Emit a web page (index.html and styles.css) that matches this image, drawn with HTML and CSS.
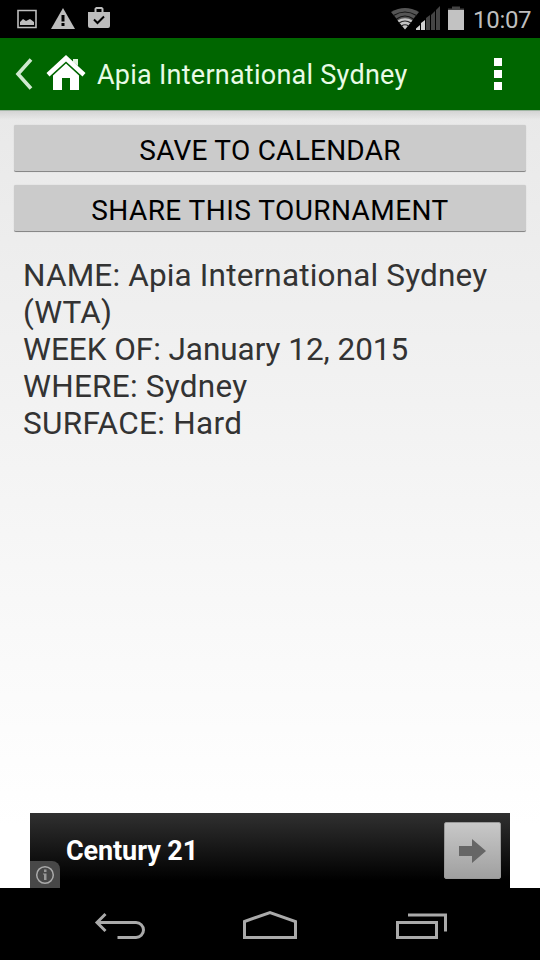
FILE: index.html
```html
<!DOCTYPE html>
<html lang="en">
<head>
    <meta charset="UTF-8">
    <title>Apia International Sydney</title>
    <link rel="stylesheet" href="styles.css">
</head>
<body>
<div class="screen">
    <div class="status">
        <svg class="notify" width="96" height="38" viewBox="0 0 96 38">
            <path d="M1 10.5h18v17H1z" fill="none" stroke="#bdbdbd" stroke-width="1.6"/>
            <path d="M3 25v-3l3-3 3 2 4-2 4 3v3z" fill="#bdbdbd"/>
            <path d="M46 8L58 29H34z" fill="#bdbdbd"/>
            <path d="M44.500 15h3v6.500h-3zM44.500 23h3v3h-3z" fill="#000"/>
            <path d="M71 12h6.500V8.500L79 7h6l1.500 1.500V12H93v14q0 2-2 2H73q-2 0-2-2zM79.500 12h5V9h-5z" fill="#bdbdbd" fill-rule="evenodd"/>
            <path d="M77 19.500l3.500 3.500 6.500-6.500" fill="none" stroke="#000" stroke-width="2"/>
        </svg>
        <svg class="signal" width="76" height="38" viewBox="0 0 76 38">
            <path d="M1 12Q15 4 29 12L15 29z" fill="#555"/>
            <path d="M3.500 15.500Q15 8.500 26.500 15.500M6.500 19Q15 13 23.500 19" fill="none" stroke="#151515" stroke-width="1.200"/>
            <path d="M7.500 20.500Q15 16 22.500 20.500L15 29.500z" fill="#c4c4c4"/>
            <path d="M9 23q6-4 12 0M11.500 26q3.500-2.500 7 0" fill="none" stroke="#222" stroke-width="1.200"/>
            <path d="M26 30v-1.500l4-3.500v5zM31 30v-7l4-3v10z" fill="#d0d0d0"/>
            <path d="M36 30V18l4-3v15zM41 30V15l4-4v19zM46 30V10l4-4v24z" fill="#444"/>
            <path d="M58 8.500h4V6.500h8v2h4V30H58z" fill="#444"/>
            <path d="M58 10h16v20H58z" fill="#c2c2c2"/>
        </svg>
        <span class="clock">10:07</span>
    </div>
    <div class="bar">
        <svg class="up" width="90" height="72" viewBox="0 0 90 72">
            <path d="M31 21.500L18 36l13 14.500" fill="none" stroke="#cfe8cf" stroke-width="3.600"/>
            <path d="M73 21h5v7l-5-4z" fill="#e0f4de"/>
            <path d="M66 17l19.500 18-3 3.500L66 23.500 49.500 38.500l-3-3.500z" fill="#fff"/>
            <path d="M66 25.500l13 12V52h-9V40h-8v12h-9V37.500z" fill="#fff"/>
        </svg>
        <span class="title">Apia International Sydney</span>
        <div class="more"><i></i><i></i><i></i></div>
    </div>
    <div class="content">
        <button class="save">SAVE TO CALENDAR</button>
        <button class="share">SHARE THIS TOURNAMENT</button>
        <div class="info">
            <p>NAME: Apia International Sydney (WTA)</p>
            <p class="week">WEEK OF: January 12, 2015</p>
            <p class="where">WHERE: Sydney</p>
            <p class="surface">SURFACE: Hard</p>
        </div>
        <div class="ad">
            <span class="ad-name">Century 21</span>
            <div class="ad-go">
                <svg width="27" height="24" viewBox="0 0 27 24"><path d="M0 7h13V0l14 12-14 12v-7H0z" fill="#666"/></svg>
            </div>
            <div class="ad-info">
                <svg width="20" height="20" viewBox="0 0 20 20">
                    <circle cx="10" cy="10" r="8.300" fill="none" stroke="#aaa" stroke-width="1.500"/>
                    <path d="M9 4.500h2.500V7H9zM8 8.500h3.500V15H9V9.500H8z" fill="#999"/>
                </svg>
            </div>
        </div>
    </div>
    <div class="nav">
        <svg width="540" height="72" viewBox="0 0 540 72" fill="none" stroke="#aaa" stroke-width="3">
            <path d="M98 34.500h38a7.500 7.500 0 0 1 0 15H117.500M105.500 26l-8.500 8.500 8.500 8.500"/>
            <path d="M244.500 33.500L270 24.500l25.500 9v16h-51z"/>
            <path d="M397.500 34.500h39v15h-39zM408 27h37.500v16.500"/>
        </svg>
    </div>
</div>
</body>
</html>
```

FILE: styles.css
```css
*{
    box-sizing: border-box;
}
body{
    margin: 0;
    font-family: Roboto, "Noto Sans", sans-serif;
}
svg{
    display: block;
}
.screen{
    width: 540px;
    height: 960px;
    display: flex;
    flex-direction: column;
    overflow: hidden;
    background: #000;
}
.status{
    height: 38px;
    display: flex;
    align-items: center;
    padding-right: 8px;
}
.notify{
    margin-left: 17px;
}
.signal{
    margin-left: auto;
}
.clock{
    width: 59px;
    margin-left: 7px;
    font-size: 24px;
    line-height: 38px;
    letter-spacing: -.3px;
    padding-top: 1px;
    color: #bebebe;
    white-space: nowrap;
}
.bar{
    height: 72px;
    display: flex;
    align-items: center;
    background: #060;
}
.title{
    margin-left: 7px;
    padding-top: 2px;
    font-size: 27px;
    letter-spacing: .25px;
    color: #e8fbe6;
    white-space: nowrap;
}
.more{
    display: flex;
    flex-direction: column;
    gap: 4px;
    margin: 0 38px 0 auto;
}
.more i{
    width: 8px;
    height: 8px;
    background: #fff;
}
.content{
    height: 778px;
    display: flex;
    flex-direction: column;
    padding: 14px 14px 0;
    border-top: 1px solid #9fb5a2;
    background: linear-gradient(rgba(0,0,0,.09), transparent 9px), linear-gradient(#e9e9e9, #fff 92%);
}
button{
    height: 47px;
    margin-bottom: 13px;
    padding: 4px 0 0;
    border: 0;
    border-bottom: 1px solid #888;
    border-radius: 2px;
    background: #cbcbcb;
    box-shadow: 0 0 1px #bbb;
    font: 28px Roboto, sans-serif;
    color: #000;
}
.save{
    letter-spacing: .25px;
}
.share{
    letter-spacing: .45px;
}
.info{
    margin: 12px 9px 0;
    font-size: 31.5px;
    line-height: 37px;
    letter-spacing: .17px;
    color: #333;
}
.info p{
    margin: 0;
}
.info .week{
    letter-spacing: -.04px;
}
.info .where{
    letter-spacing: .25px;
}
.info .surface{
    letter-spacing: .3px;
}
.ad{
    position: relative;
    width: 480px;
    height: 75px;
    display: flex;
    align-items: center;
    justify-content: space-between;
    margin: auto auto 0;
    padding: 0 9px 0 36px;
    background: linear-gradient(#303030, #000 90%);
}
.ad-name{
    font-size: 27px;
    font-weight: bold;
    letter-spacing: -.1px;
    color: #fff;
}
.ad-go{
    width: 57px;
    height: 57px;
    display: flex;
    align-items: center;
    justify-content: center;
    border: 1px solid #999;
    border-radius: 2px;
    background: linear-gradient(#c8c8c8, #a0a0a0);
}
.ad-info{
    position: absolute;
    left: 0;
    bottom: 0;
    width: 30px;
    height: 27px;
    padding: 4px 5px;
    border-top-right-radius: 8px;
    background: #484848;
}
.nav{
    height: 72px;
}
```
